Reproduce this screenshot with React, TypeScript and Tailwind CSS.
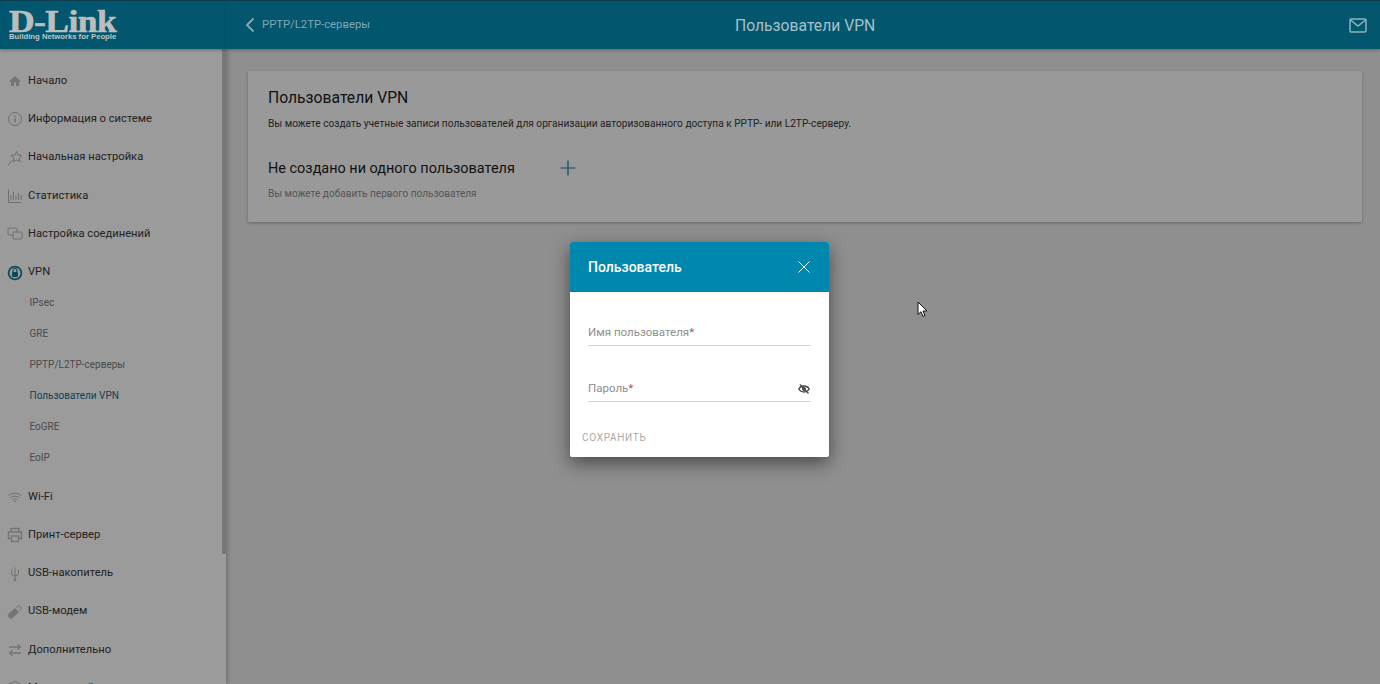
import React from "react";

const stroke = { fill: "none", stroke: "#6f6f6f", strokeWidth: 1 } as const;

const icons: Record<string, React.ReactNode> = {
  home: <path d="M8 3 2 8.500h2V13h3V9.500h2V13h3V8.500h2z" fill="#757575" />,
  info: (
    <>
      <circle cx="8" cy="8" r="6.500" {...stroke} />
      <path d="M8 4.500v1.500M8 7.200v4.300" {...stroke} strokeWidth={1.4} />
    </>
  ),
  star: <path d="M9.500 1.500l1.600 3.600 3.900.4-2.900 2.600.8 3.800-3.400-2-3.400 2 .8-3.800L4 5.500l3.900-.4zM5 10.500 1 15" {...stroke} />,
  chart: <path d="M1.500 1.500v13h13M4 12V7M6.500 12V4M9 12V8M11.500 12V5M14 12V7" {...stroke} />,
  conn: (
    <>
      <rect x="1" y="2" width="9" height="7" rx="1" {...stroke} />
      <rect x="6" y="6" width="9" height="7" rx="1" fill="#9b9b9b" stroke="#6f6f6f" />
    </>
  ),
  vpn: (
    <>
      <circle cx="8" cy="8" r="6.400" fill="none" stroke="#0b4a5c" strokeWidth={1.7} />
      <rect x="5" y="7" width="6" height="5" rx="1" fill="#0b4a5c" />
      <path d="M6 7V5.500a2 2 0 0 1 4 0V7" fill="none" stroke="#0b4a5c" strokeWidth={1.2} />
    </>
  ),
  wifi: <path d="M1.500 6.500c4-3 9-3 13 0M3.500 8.700c2.800-2 6.200-2 9 0M5.500 10.800c1.600-1 3.400-1 5 0M7 12.700c.6-.3 1.400-.3 2 0" {...stroke} />,
  print: (
    <>
      <path d="M4 5V1.500h8V5M4 11.500H1.500V5h13v6.500H12" fill="none" stroke="#757575" strokeWidth={1.4} />
      <rect x="4.500" y="9" width="7" height="5.500" fill="none" stroke="#757575" strokeWidth={1.3} />
    </>
  ),
  usb: (
    <>
      <path d="M8 1.500v11.500M4.500 3.500v3c0 2 1.500 3.500 3.500 3.500s3.500-1.500 3.500-3.500v-3" fill="none" stroke="#757575" strokeWidth={1.1} />
      <circle cx="8" cy="13.800" r="1.400" fill="#757575" />
    </>
  ),
  modem: (
    <>
      <path d="M1 10.500 8 4l4 4-7 6.500q-1 .7-1.800 0L1 12.300q-.6-1 0-1.800z" fill="#757575" />
      <path d="M9.500 3.500 12 1.500l2.500 2.500-2 2.500" fill="none" stroke="#757575" />
    </>
  ),
  adv: <path d="M2 5h11M10.500 2.500 13.500 5l-3 2.500M14 11H3M5.500 8.500 2.500 11l3 2.500" fill="none" stroke="#757575" strokeWidth={1.3} />,
  shield: <path d="M8 1.500 14 4v4c0 3-3 5.500-6 6.500C5 13.500 2 11 2 8V4z" {...stroke} />,
};

type Item = { label: string; icon?: string; active?: boolean };

const before: Item[] = [
  { label: "Начало", icon: "home" },
  { label: "Информация о системе", icon: "info" },
  { label: "Начальная настройка", icon: "star" },
  { label: "Статистика", icon: "chart" },
  { label: "Настройка соединений", icon: "conn" },
  { label: "VPN", icon: "vpn" },
];

const subs: Item[] = [
  { label: "IPsec" },
  { label: "GRE" },
  { label: "PPTP/L2TP-серверы" },
  { label: "Пользователи VPN", active: true },
  { label: "EoGRE" },
  { label: "EoIP" },
];

const after: Item[] = [
  { label: "Wi-Fi", icon: "wifi" },
  { label: "Принт-сервер", icon: "print" },
  { label: "USB-накопитель", icon: "usb" },
  { label: "USB-модем", icon: "modem" },
  { label: "Дополнительно", icon: "adv" },
  { label: "Межсетевой экран", icon: "shield" },
];

function MenuRow({ item }: { item: Item }) {
  return (
    <div className="flex h-[38.300px] items-center gap-[5px] pl-[7px] text-[11.200px] text-[#222]">
      <svg width="16" height="16" viewBox="0 0 16 16" className="shrink-0">
        {icons[item.icon as string]}
      </svg>
      <span>{item.label}</span>
    </div>
  );
}

function SubRow({ item }: { item: Item }) {
  return (
    <div className={`flex h-[31px] items-center pl-[29.500px] text-[10px] ${item.active ? "text-[#0d4254]" : "text-[#4a4a4a]"}`}>
      {item.label}
    </div>
  );
}

function Sidebar() {
  return (
    <aside className="relative h-full w-[226px] shrink-0 overflow-hidden bg-[#9b9b9b] pt-[13px] shadow-[2px_0_4px_rgba(0,0,0,0.2)]">
      {before.map((item) => (
        <MenuRow key={item.label} item={item} />
      ))}
      <div className="-mt-[4.500px] mb-[4.500px]">
        {subs.map((item) => (
          <SubRow key={item.label} item={item} />
        ))}
      </div>
      {after.map((item) => (
        <MenuRow key={item.label} item={item} />
      ))}
      <div className="absolute right-0 top-0 h-[505px] w-[4px] bg-[#777]" />
    </aside>
  );
}

function Header() {
  return (
    <header className="relative z-10 flex h-[49px] shrink-0 items-center border-t border-[#0c3e4c] bg-[#02566d] shadow-[0_1px_3px_rgba(0,0,0,0.35)]">
      <div className="flex h-full w-[226px] shrink-0 flex-col border-r border-[#064d61] pl-[9px] pt-[9px] text-[#bdbdbd]">
        <div className="h-[22px] origin-top-left scale-x-[1.11] font-['Liberation_Serif',serif] text-[32px] font-bold leading-[22px] tracking-[-0.5px] [-webkit-text-stroke:0.6px_#bdbdbd]">
          D-Link
        </div>
        <div className="whitespace-nowrap font-['Liberation_Sans',sans-serif] text-[7.700px] font-bold leading-[10px] text-[#bdc8cc]">
          Building Networks for People
        </div>
      </div>
      <div className="flex items-center gap-[7px] pl-[19px] text-[11.300px] text-[#7fa7b2]">
        <svg width="10" height="16" viewBox="0 0 10 16" fill="none" stroke="#7fa7b2" strokeWidth="2">
          <path d="M8.500 1.500 2 8l6.500 6.500" />
        </svg>
        <span className="mt-[1px]">PPTP/L2TP-серверы</span>
      </div>
      <div className="absolute left-[735px] top-[14.500px] text-[15.700px] leading-[20px] text-[#a6c0c8]">Пользователи VPN</div>
      <svg className="ml-auto mr-[13px]" width="18" height="15" viewBox="0 0 18 15" fill="none" stroke="#8fb2bc" strokeWidth="1.500">
        <rect x="1" y="1" width="16" height="13" rx="1" />
        <path d="M1.500 2 9 8l7.500-6" />
      </svg>
    </header>
  );
}

function Card() {
  return (
    <section className="h-[151px] rounded-[1px] bg-[#999] pl-[20px] pt-[17px] shadow-[0_1px_3px_rgba(0,0,0,0.3)]">
      <h1 className="text-[15.700px] leading-[20px] text-[#111]">Пользователи VPN</h1>
      <p className="mt-[9px] text-[10.130px] leading-[14px] text-[#222]">
        Вы можете создать учетные записи пользователей для организации авторизованного доступа к PPTP- или L2TP-серверу.
      </p>
      <div className="mt-[28px] flex items-center">
        <h2 className="w-[291.500px] text-[14.450px] leading-[20px] text-[#111]">Не создано ни одного пользователя</h2>
        <svg width="16" height="16" viewBox="0 0 16 16" stroke="#0d4a5c" strokeWidth="1.200" className="-mt-[2px]">
          <path d="M8 .5v15M.5 8h15" />
        </svg>
      </div>
      <p className="mt-[8px] text-[10.070px] leading-[14px] text-[#555]">Вы можете добавить первого пользователя</p>
    </section>
  );
}

function Field({ label, eye }: { label: string; eye?: boolean }) {
  return (
    <div className="flex h-[30px] items-center justify-between border-b border-[#d4d4d4] pt-[4px] text-[11.500px] text-[#8e8e8e]">
      <span>
        {label}
        <span className="text-[#a0574c]">*</span>
      </span>
      {eye && (
        <svg width="12" height="12" viewBox="0 0 12 12" fill="none" stroke="#4a4a4a" strokeWidth="1.300" className="mr-[1px]">
          <path d="M.7 6C2 3.800 4 3 6 3s4 .8 5.300 3C10 8.200 8 9 6 9S2 8.200.7 6z" />
          <circle cx="6" cy="6" r="1.300" fill="#4a4a4a" />
          <path d="M2 1.500 10.500 10.500" />
        </svg>
      )}
    </div>
  );
}

function Modal() {
  return (
    <div className="absolute left-[570px] top-[242px] z-20 h-[215px] w-[259px] rounded-[2px] bg-white shadow-[0_6px_18px_rgba(0,0,0,0.5)]">
      <div className="flex h-[50px] items-center justify-between rounded-t-[2px] bg-[#0087ae] pl-[18px] pr-[19px]">
        <span className="text-[14px] font-medium text-white">Пользователь</span>
        <svg width="12" height="12" viewBox="0 0 12 12" stroke="#fff" strokeWidth="1">
          <path d="M.5.5l11 11M11.500.5l-11 11" />
        </svg>
      </div>
      <div className="flex flex-col gap-[26px] pl-[18px] pr-[18px] pt-[24px]">
        <Field label="Имя пользователя" />
        <Field label="Пароль" eye />
      </div>
      <div className="pl-[12px] pt-[30px] text-[10px] uppercase leading-[12px] tracking-[0.7px] text-[#aaa]">Сохранить</div>
    </div>
  );
}

function Cursor() {
  return (
    <svg className="absolute left-[917px] top-[301px] z-30" width="11" height="17" viewBox="0 0 11 17">
      <path d="M1 1v12.500l3-2.800 2 4.800 2-.9-2-4.600h4z" fill="#fff" stroke="#111" strokeWidth="1" />
    </svg>
  );
}

export default function App() {
  return (
    <div className="relative flex h-[684px] w-[1380px] flex-col overflow-hidden bg-[#8f8f8f] font-['Roboto',sans-serif]">
      <Header />
      <div className="flex min-h-0 flex-1">
        <Sidebar />
        <main className="flex-1 pl-[22px] pr-[18px] pt-[22px]">
          <Card />
        </main>
      </div>
      <Modal />
      <Cursor />
    </div>
  );
}
